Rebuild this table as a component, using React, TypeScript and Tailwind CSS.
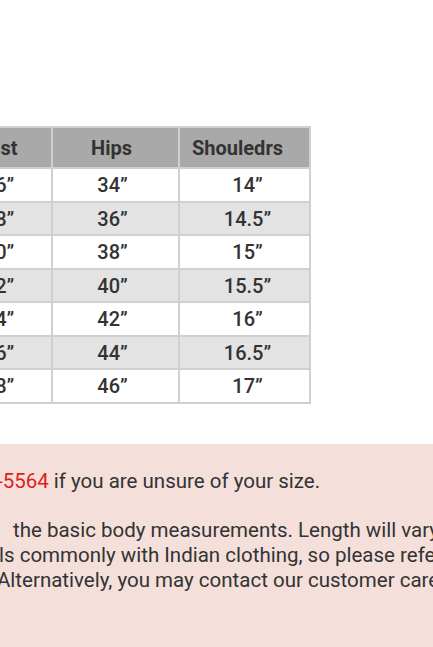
import React from "react";

const rows = [
  { bust: "36”", hips: "34”", shoulders: "14”" },
  { bust: "38”", hips: "36”", shoulders: "14.5”" },
  { bust: "40”", hips: "38”", shoulders: "15”" },
  { bust: "42”", hips: "40”", shoulders: "15.5”" },
  { bust: "44”", hips: "42”", shoulders: "16”" },
  { bust: "46”", hips: "44”", shoulders: "16.5”" },
  { bust: "48”", hips: "46”", shoulders: "17”" },
];

const headers = [
  { label: "Bust", pad: "pl-[2px]" },
  { label: "Hips", pad: "pr-[8px]" },
  { label: "Shouledrs", pad: "pr-[14px]" },
];

const SizeTable = () => (
  <div className="-ml-[61px] mt-[126px] grid w-[372px] grid-cols-[110px_125px_129px] grid-rows-[39px_32px_31px_32px_31px_32px_31px_32px] gap-[2px] bg-[#d0d0d0] p-[2px] text-[20px] text-[#333]">
    {headers.map((h) => (
      <div key={h.label} className={`flex items-center justify-center bg-[#a9a9a9] font-bold ${h.pad}`}>
        {h.label}
      </div>
    ))}
    {rows.map((r, i) => {
      const bg = i % 2 === 1 ? "bg-[#e3e3e3]" : "bg-white";
      return (
        <React.Fragment key={r.hips}>
          <div className={`flex items-center justify-center pl-[6px] font-medium ${bg}`}>{r.bust}</div>
          <div className={`flex items-center justify-center pr-[6px] font-medium ${bg}`}>{r.hips}</div>
          <div className={`flex items-center justify-center pl-[6px] font-medium ${bg}`}>{r.shoulders}</div>
        </React.Fragment>
      );
    })}
  </div>
);

export default function App() {
  return (
    <div className="h-[647px] w-[433px] overflow-hidden bg-white font-['Roboto',sans-serif]">
      <SizeTable />
      <div className="mt-[40px] h-[300px] bg-[#f4dfdb] pt-[25px] text-[20.5px] leading-[25px] text-[#333]">
        <p className="-ml-[3px] whitespace-nowrap">
          <span className="text-[#e0201b]">-5564</span> if you are unsure of your size.
        </p>
        <div className="mt-[24px] whitespace-nowrap">
          <p className="pl-[13px]">the basic body measurements. Length will vary with the style</p>
          <p className="-ml-[1px]">ls commonly with Indian clothing, so please refer to the</p>
          <p className="-ml-[3px]">Alternatively, you may contact our customer care team</p>
        </div>
      </div>
    </div>
  );
}
